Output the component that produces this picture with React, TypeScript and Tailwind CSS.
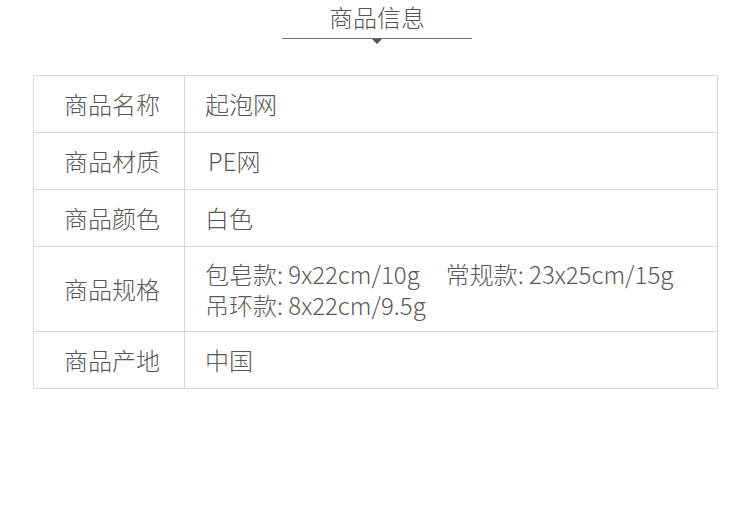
import React from 'react';

const rows: { label: string; value: React.ReactNode; tall?: boolean }[] = [
  { label: '商品名称', value: '起泡网' },
  { label: '商品材质', value: <span className="pl-[3px]">PE网</span> },
  { label: '商品颜色', value: '白色' },
  {
    label: '商品规格',
    tall: true,
    value: (
      <div className="leading-[31px]">
        <div>
          包皂款: 9x22cm/10g<span className="inline-block w-[26px]" />常规款: 23x25cm/15g
        </div>
        <div>吊环款: 8x22cm/9.5g</div>
      </div>
    ),
  },
  { label: '商品产地', value: '中国' },
];

const App: React.FC = () => {
  return (
    <div
      className="w-[750px] h-[515px] bg-white text-[#595959] font-light"
      style={{ fontFamily: '"Noto Sans CJK SC", "Noto Sans", sans-serif' }}
    >
      {/* 标题 */}
      <div className="flex flex-col items-center pt-[2px] pl-[4px]">
        <div className="text-[24px] leading-[30px] text-[#555]">商品信息</div>
        <div className="relative mt-[6px] w-[190px] h-px bg-[#707070]">
          <div className="absolute left-1/2 top-px -translate-x-1/2 w-0 h-0 border-l-[5px] border-r-[5px] border-t-[5px] border-l-transparent border-r-transparent border-t-[#555]" />
        </div>
      </div>

      {/* 表格 */}
      <div className="ml-[33px] mt-[36px] w-[685px] border border-[#d9d9d9]">
        {rows.map((r, i) => (
          <div
            key={r.label}
            className={`flex ${i === 0 ? 'h-[56px]' : r.tall ? 'h-[85px] border-t border-[#d9d9d9]' : 'h-[57px] border-t border-[#d9d9d9]'}`}
          >
            <div className="w-[151px] shrink-0 flex items-center pl-[30px] border-r border-[#d9d9d9] text-[24px]">
              {r.label}
            </div>
            <div className="flex-1 flex items-center pl-[20px] text-[24px] whitespace-nowrap">
              {r.value}
            </div>
          </div>
        ))}
      </div>
    </div>
  );
};

export default App;
